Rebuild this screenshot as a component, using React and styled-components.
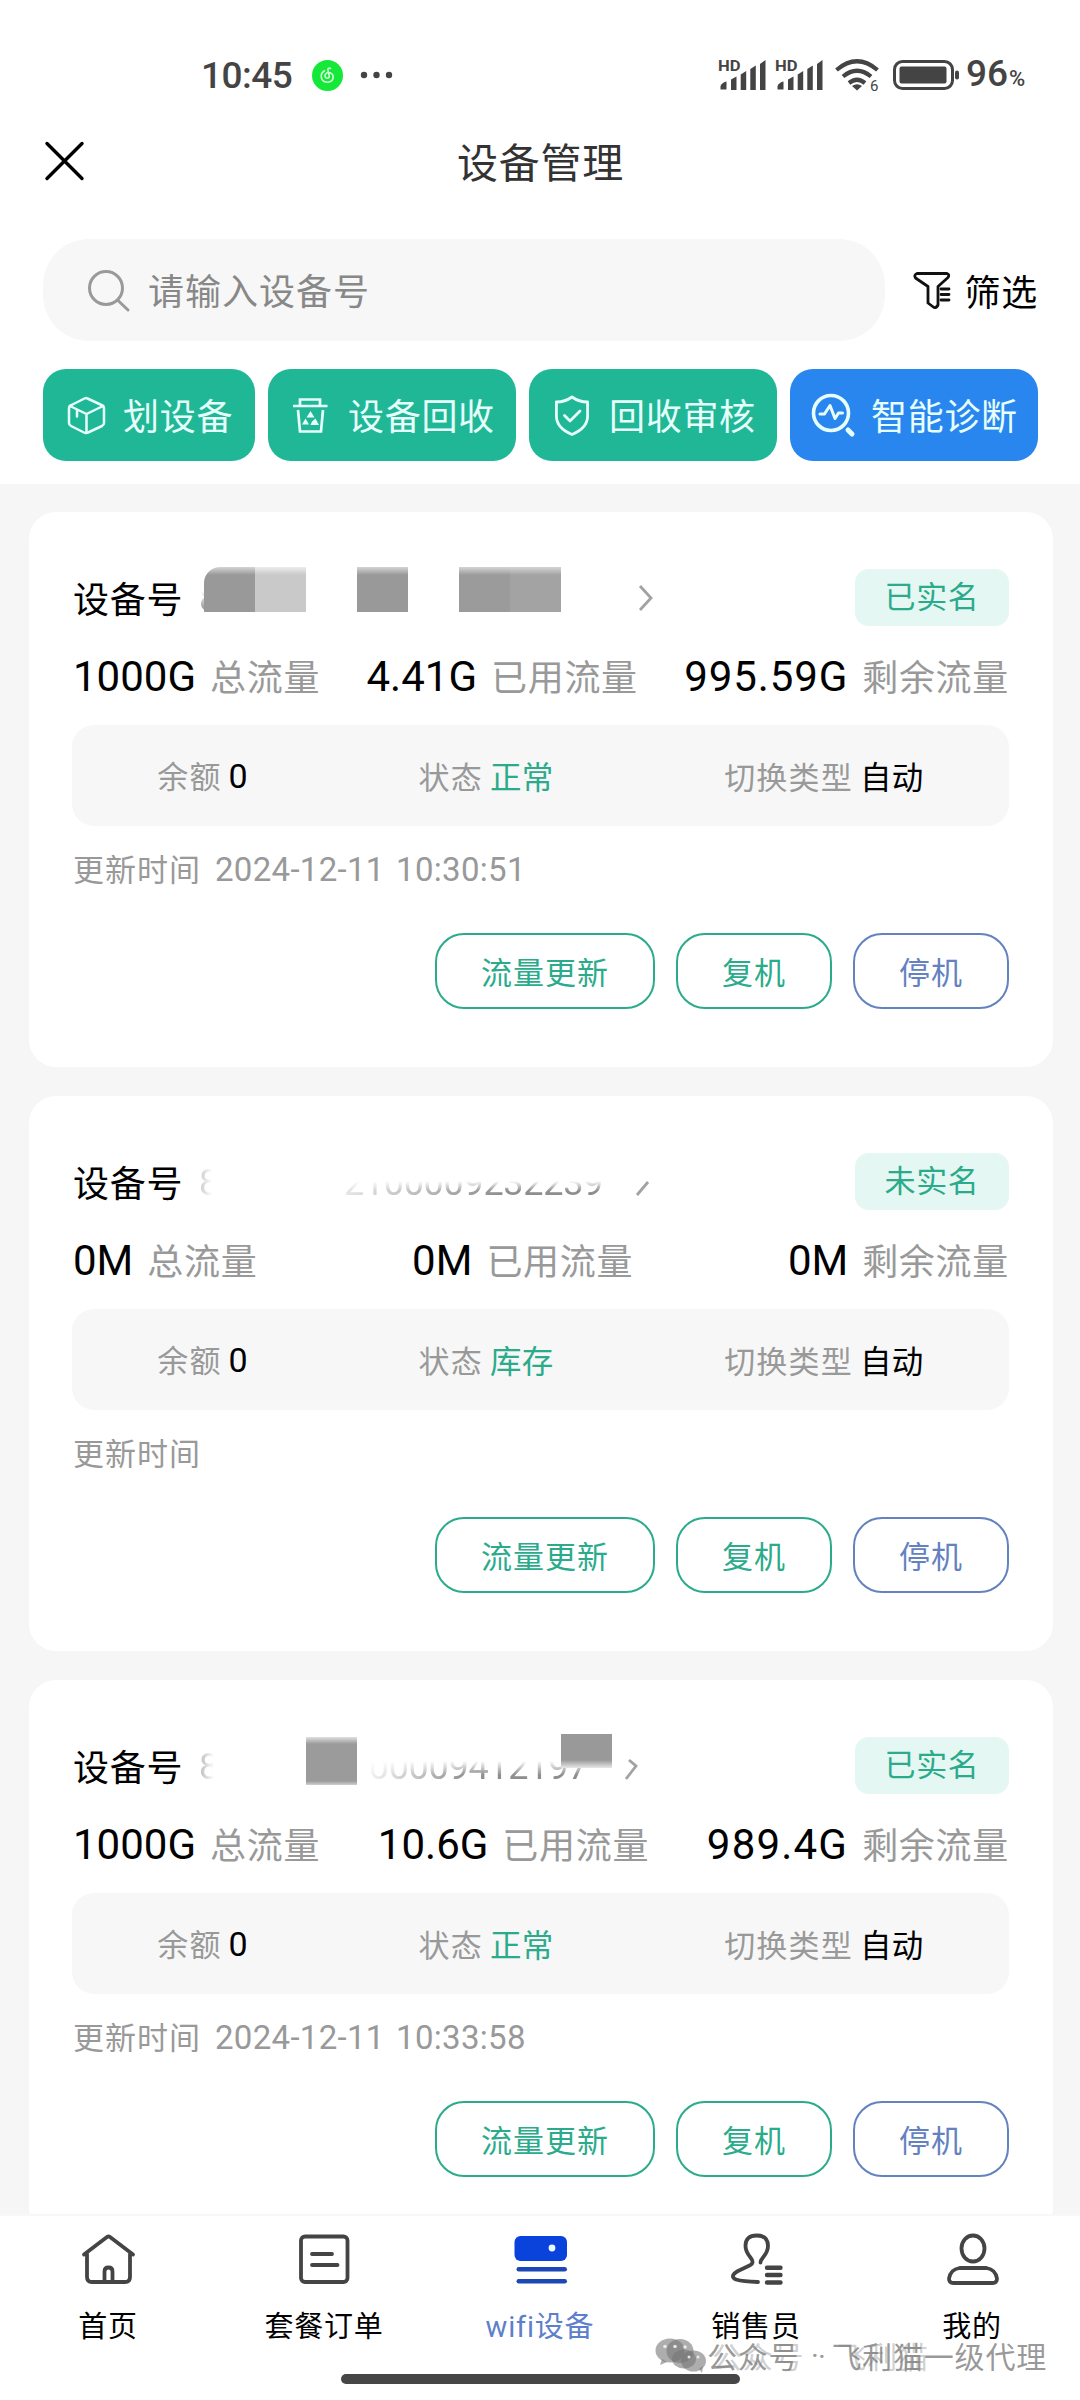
import React from 'react'
import styled, { createGlobalStyle } from 'styled-components'

const GlobalStyle = createGlobalStyle`
    * {
        box-sizing: border-box;
    }
    body {
        margin: 0;
        background: #fff;
    }
`

const Page = styled.div`
    position: relative;
    display: flex;
    flex-direction: column;
    width: 1080px;
    height: 2400px;
    overflow: hidden;
    background: #f6f6f6;
    font-family: Roboto, "Noto Sans CJK SC", sans-serif;
    color: #000;
    white-space: nowrap;
    svg {
        display: block;
        flex: none;
        overflow: visible;
    }
`

const Header = styled.header`
    height: 484px;
    padding: 56px 42px 0 43px;
    background: #fff;
`

const StatusBar = styled.div`
    display: flex;
    align-items: center;
    height: 38px;
    padding-left: 158px;
    color: #444;
`

const Clock = styled.span`
    width: 92px;
    margin-right: 19px;
    padding-top: 1px;
    font-size: 37px;
    font-weight: 500;
    line-height: 38px;
    letter-spacing: -0.5px;
`

const StatusIcons = styled.div`
    display: flex;
    align-items: center;
    margin-left: 325px;
`

const Percent = styled.span`
    margin-left: 6px;
    padding-top: 2px;
    font-size: 37px;
    font-weight: 500;
    line-height: 38px;
    small {
        margin-left: 1px;
        font-size: 22px;
    }
`

const TitleBar = styled.div`
    display: grid;
    grid-template-columns: 42px 1fr 42px;
    align-items: center;
    height: 136px;
`

const Title = styled.h1`
    margin: 0 0 5px;
    text-align: center;
    font-size: 41px;
    font-weight: 400;
    letter-spacing: 0.7px;
    color: #333;
`

const SearchRow = styled.div`
    display: flex;
    align-items: center;
    margin-top: 9px;
    height: 102px;
`

const SearchBox = styled.div`
    display: flex;
    align-items: center;
    width: 842px;
    height: 102px;
    padding-left: 43px;
    border-radius: 46px;
    background: #f7f7f7;
    color: #888;
    font-size: 36px;
    letter-spacing: 1px;
    span {
        margin: 0 0 2px 17px;
    }
`

const Filter = styled.div`
    display: flex;
    align-items: center;
    margin-left: 28px;
    font-size: 36px;
    letter-spacing: 0.7px;
    span {
        margin: 0 0 1px 14px;
    }
`

const Actions = styled.div`
    display: flex;
    gap: 13px;
    margin-top: 28px;
`

const Action = styled.div`
    display: flex;
    align-items: center;
    flex: none;
    width: ${(p) => p.$width}px;
    height: 92px;
    padding-left: 22px;
    border-radius: 23px;
    background: ${(p) => p.$bg};
    color: #e6fffb;
    font-size: 36px;
    letter-spacing: 0.7px;
    span {
        margin: 0 0 2px 15px;
    }
`

const List = styled.main`
    display: flex;
    flex: 1;
    flex-direction: column;
    gap: 29px;
    min-height: 0;
    padding: 28px 27px 0 29px;
    overflow: hidden;
`

const Card = styled.section`
    flex: none;
    height: 555px;
    padding: 57px 44px 0 43px;
    border-radius: 27px;
    background: #fff;
`

const CardHead = styled.div`
    display: flex;
    align-items: center;
    height: 57px;
`

const DeviceLabel = styled.span`
    width: 108px;
    font-size: 36px;
    letter-spacing: 0.7px;
    margin: 0 0 1px 1px;
`

// The serial is hidden by mosaic tiles laid over the faded digits
const Serial = styled.div`
    position: relative;
    width: ${(p) => p.$width}px;
    height: 57px;
    margin-left: 17px;
    color: #8e8e8e;
    font-size: 36px;
    line-height: 60px;
`

const Digits = styled.span`
    position: absolute;
    top: 0;
    left: ${(p) => p.$left}px;
    width: ${(p) => p.$width}px;
    height: 57px;
    text-align: right;
    letter-spacing: -0.3px;
    mask-image: ${(p) => p.$mask};
    mask-composite: intersect;
`

const Tile = styled.i`
    position: absolute;
    left: ${(p) => p.$left}px;
    top: ${(p) => p.$top}px;
    width: 51px;
    height: ${(p) => p.$height}px;
    background: ${(p) => p.$bg};
    border-top-left-radius: ${(p) => p.$round || 0}px;
`

const Badge = styled.span`
    margin-left: auto;
    width: 154px;
    height: 57px;
    border-radius: 14px;
    background: #e5f7f2;
    color: #2bab8b;
    text-align: center;
    font-size: 31px;
    line-height: 57px;
    letter-spacing: 0.7px;
`

const Traffic = styled.div`
    display: flex;
    justify-content: space-between;
    align-items: center;
    height: 60px;
    margin-top: 19px;
    padding-left: 1px;
`

const Amount = styled.div`
    display: flex;
    align-items: baseline;
    color: #999;
    font-size: 36px;
    letter-spacing: 0.7px;
    b {
        margin-right: 14px;
        color: #000;
        font-size: 42px;
        font-weight: 400;
        letter-spacing: ${(p) => p.$spacing || 0}px;
    }
`

const InfoBox = styled.div`
    display: flex;
    justify-content: space-around;
    align-items: center;
    height: 101px;
    margin-top: 20px;
    padding-bottom: 2px;
    border-radius: 22px;
    background: #f7f7f7;
`

const Info = styled.div`
    color: #999;
    font-size: 31px;
    letter-spacing: 1.2px;
    span {
        margin-left: 7px;
        color: ${(p) => p.$color || '#000'};
        font-size: 31.5px;
        letter-spacing: 0.4px;
    }
`

const Balance = styled(Info)`
    span {
        font-size: 34px;
    }
`

const Updated = styled.div`
    height: 48px;
    margin: 20px 0 0 1px;
    color: #999;
    font-size: 31px;
    line-height: 47px;
    letter-spacing: 1px;
    span {
        margin-left: 14px;
        font-size: 33px;
        letter-spacing: 0.3px;
        word-spacing: 3px;
    }
`

const Buttons = styled.div`
    display: flex;
    justify-content: flex-end;
    gap: 21px;
    margin-top: 39px;
`

const Button = styled.button`
    width: ${(p) => p.$width}px;
    height: 76px;
    padding: 0 0 2px;
    border: 2px solid ${(p) => p.$color};
    border-radius: 29px;
    background: none;
    color: ${(p) => p.$color};
    font-family: inherit;
    font-size: 31px;
    letter-spacing: 1px;
`

const Nav = styled.nav`
    display: flex;
    flex-direction: column;
    align-items: center;
    height: 186px;
    border-top: 2px solid #f8f8f8;
    background: #fff;
`

const Tabs = styled.div`
    display: grid;
    grid-template-columns: repeat(5, 216px);
    height: 158px;
    padding-top: 17px;
`

const Tab = styled.div`
    display: flex;
    flex-direction: column;
    align-items: center;
    color: ${(p) => (p.$active ? '#5e7fcb' : '#000')};
    font-size: 29px;
    letter-spacing: 0.8px;
    span {
        margin-top: 18px;
        line-height: 44px;
    }
`

const HomeBar = styled.div`
    width: 399px;
    height: 10px;
    border-radius: 5px;
    background: #464646;
`

const Watermark = styled.div`
    position: absolute;
    left: 655px;
    top: 2333px;
    display: flex;
    align-items: center;
    height: 44px;
    color: rgba(120, 120, 120, 0.75);
    font-size: 30px;
    letter-spacing: 0.8px;
    span {
        text-shadow: 5px 0 0 rgba(150, 150, 150, 0.45);
    }
    em {
        width: 32px;
        text-align: center;
        font-style: normal;
        text-shadow: 7px 1px 0 rgba(120, 120, 120, 0.75);
    }
`

const Signal = ({ gap = 0 }) => (
    <svg width="48" height="34" viewBox="0 0 48 34" style={{ marginRight: gap }}>
        <text x="0" y="13" fontSize="15" fontWeight="700" textLength="22.5" lengthAdjust="spacingAndGlyphs" fill="#444" fontFamily="Roboto, sans-serif">HD</text>
        <g fill="#444">
            <path d="M2.5 31.5v-3.5q2-4 6-4.500v8z" />
            <path d="M13 32V21.500l5.500-3v13.500z" />
            <path d="M22.700 32V16.500l5.500-3.500v19z" />
            <path d="M32.300 32V11l5.500-3.500v24.500z" />
            <path d="M42 32V6l5.500-4v30z" />
        </g>
    </svg>
)

const Wifi = () => (
    <svg width="46" height="36" viewBox="0 0 46 36" fill="none" stroke="#444" strokeWidth="4.200">
        <path d="M1.500 13q20.500-17.500 41 0" />
        <path d="M8 19.500q14-11.500 28 0" />
        <path d="M14 26q8-6.500 16 0" />
        <path d="M17 29l5 4.500 5-4.500q-5-3.500-10 0z" fill="#444" stroke="none" />
        <text x="35" y="34" fontSize="15" fill="#444" stroke="none" fontFamily="Roboto, sans-serif">6</text>
    </svg>
)

const Battery = () => (
    <svg width="67" height="32" viewBox="0 0 67 32">
        <rect x="1.500" y="2.500" width="58" height="27" rx="8" fill="none" stroke="#444" strokeWidth="3" />
        <rect x="6.500" y="7.500" width="47" height="17" rx="2" fill="#444" />
        <rect x="62" y="11.500" width="4" height="9" rx="2" fill="#444" />
    </svg>
)

const MusicBadge = () => (
    <svg width="31" height="31" viewBox="0 0 31 31">
        <circle cx="15.500" cy="15.500" r="15.500" fill="#16e83a" />
        <g fill="none" stroke="#d3ffd8" strokeWidth="1.600" strokeLinecap="round">
            <path d="M18.500 8.500c-2-1-3 .2-2.500 2l1.300 5.500c.4 3-4.300 3-4.300 0 0-2.500 2.500-4 5-3.200 4.500 1.500 4.500 9-2.200 9.500-7.500 0-8.500-8.500-3.300-11.500" />
        </g>
    </svg>
)

const MoreDots = () => (
    <svg width="33" height="8" viewBox="0 0 33 8" fill="#444" style={{ marginLeft: 17 }}>
        <circle cx="4" cy="4" r="3.200" />
        <circle cx="16.500" cy="4" r="3.200" />
        <circle cx="29" cy="4" r="3.200" />
    </svg>
)

const CloseIcon = () => (
    <svg width="42" height="42" viewBox="0 0 42 42" stroke="#000" strokeWidth="3.400" strokeLinecap="round">
        <path d="M4 2.500l35 35M39 2.500L4 37.500" />
    </svg>
)

const SearchIcon = () => (
    <svg width="45" height="44" viewBox="0 0 45 44" fill="none" stroke="#999" strokeWidth="3" strokeLinecap="round">
        <circle cx="20" cy="20" r="16.500" />
        <path d="M32 32.500l10 9.500" />
    </svg>
)

const FilterIcon = () => (
    <svg width="38" height="38" viewBox="0 0 38 38" fill="none" stroke="#111" strokeWidth="2.800" strokeLinejoin="round" strokeLinecap="round">
        <path d="M4 2.500h30q3 1 1 4L25 15.500v18.500q-1.500 3-4 2.500L15 32V15.500L2.500 7Q.5 4 4 2.500z" />
        <path d="M28 18h8M28 23.500h8M28 29h8" />
    </svg>
)

const white = { fill: 'none', stroke: '#e6fffb', strokeLinecap: 'round', strokeLinejoin: 'round' }

const BoxIcon = () => (
    <svg width="43" height="43" viewBox="0 0 43 43" {...white} strokeWidth="2.500">
        <path d="M19.500 4.500q1.500-1 3 0l14 6.500q2.500 1 2.500 3.500V29q0 2-2 3l-14 6.500q-2 1-4 0L6 32q-2-1-2-3V14.500Q4 12 6.500 11z" />
        <path d="M5 12L21.500 20 38 12M21.500 20V39M12 16v6.500" />
    </svg>
)

const RecycleIcon = () => (
    <svg width="43" height="43" viewBox="0 0 43 43" {...white} strokeWidth="2.700" strokeLinecap="butt" strokeLinejoin="miter">
        <path d="M3 12h34.500M10 12V5.500h20V12M8 16l2 21.500h21L33 16" />
        <path d="M20.500 17l4 6.500h-8zM15.500 24.500l3.500 6h-7zM20.500 31h8.500l-3.500-6.500-3.500 3z" fill="#e6fffb" stroke="none" />
    </svg>
)

const ShieldIcon = () => (
    <svg width="43" height="43" viewBox="0 0 43 43" {...white} strokeWidth="2.800">
        <path d="M21 3q7 5 15.600 5v14q0 12-15.600 18.500Q5.400 34 5.400 22V8Q14 8 21 3z" />
        <path d="M13.500 21.500l5.500 5.500 10-10" />
    </svg>
)

const DiagnoseIcon = () => (
    <svg width="44" height="44" viewBox="0 0 44 44" {...white}>
        <circle cx="19" cy="20" r="17.500" strokeWidth="3.600" />
        <path d="M8 21h4.500L18 12.500l5 13 3.500-5.500h4" strokeWidth="3" />
        <path d="M36 37l4 4" strokeWidth="5" />
    </svg>
)

const chevrons = {
    full: 'M3 2l11 12L3 26',
    tail: 'M14 14L3 27',
    cut: 'M7 8l7 6L4 27',
}

const Chevron = ({ kind = 'full' }) => (
    <svg width="18" height="28" viewBox="0 0 18 28" fill="none" stroke="#a2a2a2" strokeWidth="2.800">
        <path d={chevrons[kind]} />
    </svg>
)

const dark = { fill: 'none', stroke: '#444', strokeWidth: 3.800, strokeLinecap: 'round', strokeLinejoin: 'round' }

const HomeIcon = () => (
    <svg width="56" height="54" viewBox="0 0 56 54" {...dark}>
        <path d="M4 21.500L27 4q1.500-1 3 0L53 21.500M7 21v23q0 5 5 5h33q5 0 5-5V21M24.500 48V38.500q0-4 4-4t4 4V48" />
    </svg>
)

const OrderIcon = () => (
    <svg width="56" height="54" viewBox="0 0 56 54" {...dark}>
        <rect x="5" y="3.500" width="46.500" height="45.500" rx="4" />
        <path d="M16 21h20M16 32h25.500" />
    </svg>
)

const DeviceIcon = () => (
    <svg width="56" height="54" viewBox="0 0 56 54">
        <rect x="2.500" y="3" width="52.500" height="25" rx="6" fill="#0a43dc" />
        <circle cx="40" cy="15" r="3.400" fill="#e8fbff" />
        <rect x="4.500" y="34" width="50.500" height="4.600" rx="2.300" fill="#1b48b5" />
        <rect x="4.500" y="46" width="50.500" height="4.600" rx="2.300" fill="#1b48b5" />
    </svg>
)

const SalesIcon = () => (
    <svg width="56" height="54" viewBox="0 0 56 54" {...dark}>
        <path d="M32.500 29.500q0-2 2.500-5 5-6 5-11.500Q40 2.500 28.700 2.500T17.500 13q0 5.500 5 11.500 4.500 5.500-1 8L10 38q-9 5-2 8.500 7 2 22 2.500" />
        <path d="M39 34.700h13.500M39 42h13.500M39 49.500h13.500" strokeWidth="4.400" />
    </svg>
)

const MineIcon = () => (
    <svg width="56" height="54" viewBox="0 0 56 54" {...dark}>
        <ellipse cx="29" cy="15.500" rx="11.500" ry="13" />
        <path d="M15.500 35h27q9 1.500 10.500 10.500 0 4.500-4.500 4.500h-39Q5 50 5 45.500 6.500 36.500 15.500 35z" />
    </svg>
)

const WechatMark = () => (
    <svg width="52" height="36" viewBox="0 0 52 36" fill="#777" fillOpacity="0.6">
        <ellipse cx="15" cy="13.500" rx="14.500" ry="12" />
        <ellipse cx="25" cy="14" rx="13.500" ry="12" />
        <ellipse cx="29" cy="22" rx="12" ry="9.500" />
        <ellipse cx="38.500" cy="24" rx="12.500" ry="10.500" />
        <path d="M7 22l-2 6 7-3zM44 32l3 4 1-7z" />
        <g fill="#eee" fillOpacity="0.9">
            <circle cx="10" cy="9.500" r="1.800" />
            <circle cx="20" cy="9.500" r="1.800" />
            <circle cx="30" cy="10" r="1.800" />
            <circle cx="34" cy="20" r="1.500" />
            <circle cx="43" cy="20" r="1.500" />
        </g>
    </svg>
)

const GREEN = '#2bab8b'
const BLUE = '#6482bf'

const actions = [
    { name: '划设备', icon: BoxIcon, width: 212, bg: '#20b797' },
    { name: '设备回收', icon: RecycleIcon, width: 248, bg: '#20b797' },
    { name: '回收审核', icon: ShieldIcon, width: 248, bg: '#20b797' },
    { name: '智能诊断', icon: DiagnoseIcon, width: 248, bg: '#2a86ef' },
]

const devices = [
    {
        id: 1,
        real: '已实名',
        total: '1000G',
        used: '4.41G',
        left: '995.59G',
        spacing: 0.9,
        state: '正常',
        time: '2024-12-11 10:30:51',
        serialWidth: 439,
        digits: [{ text: '8', left: 0, width: 21, mask: 'linear-gradient(transparent 22px, #000 42px)' }],
        tiles: [
            { left: 6, top: -2, height: 45, bg: 'linear-gradient(#d5d5d5, #999 8px)', round: 16 },
            { left: 57, top: -2, height: 45, bg: 'linear-gradient(#ececec, #c9c9c9 8px)' },
            { left: 159, top: -2, height: 45, bg: 'linear-gradient(#d5d5d5, #999 8px)' },
            { left: 261, top: -2, height: 45, bg: 'linear-gradient(#d5d5d5, #9b9b9b 8px)' },
            { left: 312, top: -2, height: 45, bg: 'linear-gradient(#d5d5d5, #a3a3a3 8px)' },
        ],
    },
    {
        id: 2,
        real: '未实名',
        total: '0M',
        used: '0M',
        left: '0M',
        state: '库存',
        time: '',
        serialWidth: 436,
        chevron: 'tail',
        digits: [
            { text: '8', left: 0, width: 21, mask: 'linear-gradient(90deg, #0008, transparent 14px)' },
            { text: '2100009232239', left: 103, width: 302, mask: 'linear-gradient(transparent 28px, #000 38px), linear-gradient(90deg, transparent, #000 200px)' },
        ],
        tiles: [],
    },
    {
        id: 3,
        real: '已实名',
        total: '1000G',
        used: '10.6G',
        left: '989.4G',
        spacing: 1.2,
        state: '正常',
        time: '2024-12-11 10:33:58',
        serialWidth: 424,
        chevron: 'cut',
        digits: [
            { text: '8', left: 0, width: 21, mask: 'linear-gradient(90deg, #000a, transparent 16px)' },
            { text: '00009412197', left: 160, width: 230, mask: 'linear-gradient(transparent 24px, #000 38px), linear-gradient(90deg, transparent, #000 110px)' },
        ],
        tiles: [
            { left: 108, top: 0, height: 48, bg: 'linear-gradient(#e0e0e0, #9b9b9b 7px, #9b9b9b 44px, #d0d0d0)' },
            { left: 363, top: -3, height: 34, bg: 'linear-gradient(#999 26px, #e8e8e8)' },
        ],
    },
]

const tabs = [
    { name: '首页', icon: HomeIcon },
    { name: '套餐订单', icon: OrderIcon },
    { name: 'wifi设备', icon: DeviceIcon, active: true },
    { name: '销售员', icon: SalesIcon },
    { name: '我的', icon: MineIcon },
]

const DeviceCard = ({ device }) => (
    <Card>
        <CardHead>
            <DeviceLabel>设备号</DeviceLabel>
            <Serial $width={device.serialWidth}>
                {device.digits.map((d) => (
                    <Digits key={d.text} $left={d.left} $width={d.width} $mask={d.mask}>{d.text}</Digits>
                ))}
                {device.tiles.map((t) => (
                    <Tile key={t.left} $left={t.left} $top={t.top} $height={t.height} $bg={t.bg} $round={t.round} />
                ))}
            </Serial>
            <Chevron kind={device.chevron} />
            <Badge>{device.real}</Badge>
        </CardHead>
        <Traffic>
            <Amount><b>{device.total}</b>总流量</Amount>
            <Amount><b>{device.used}</b>已用流量</Amount>
            <Amount $spacing={device.spacing}><b>{device.left}</b>剩余流量</Amount>
        </Traffic>
        <InfoBox>
            <Balance>余额<span>0</span></Balance>
            <Info $color={GREEN}>状态<span>{device.state}</span></Info>
            <Info>切换类型<span>自动</span></Info>
        </InfoBox>
        <Updated>更新时间<span>{device.time}</span></Updated>
        <Buttons>
            <Button $width={220} $color={GREEN}>流量更新</Button>
            <Button $width={156} $color={GREEN}>复机</Button>
            <Button $width={156} $color={BLUE}>停机</Button>
        </Buttons>
    </Card>
)

const App = () => {
    return (
        <Page>
            <GlobalStyle />
            <Header>
                <StatusBar>
                    <Clock>10:45</Clock>
                    <MusicBadge />
                    <MoreDots />
                    <StatusIcons>
                        <Signal gap={9} />
                        <Signal gap={12} />
                        <Wifi />
                        <span style={{ width: 12 }} />
                        <Battery />
                        <Percent>96<small>%</small></Percent>
                    </StatusIcons>
                </StatusBar>
                <TitleBar>
                    <CloseIcon />
                    <Title>设备管理</Title>
                </TitleBar>
                <SearchRow>
                    <SearchBox>
                        <SearchIcon />
                        <span>请输入设备号</span>
                    </SearchBox>
                    <Filter>
                        <FilterIcon />
                        <span>筛选</span>
                    </Filter>
                </SearchRow>
                <Actions>
                    {actions.map(({ name, icon: Icon, width, bg }) => (
                        <Action key={name} $width={width} $bg={bg}>
                            <Icon />
                            <span>{name}</span>
                        </Action>
                    ))}
                </Actions>
            </Header>
            <List>
                {devices.map((device) => (
                    <DeviceCard key={device.id} device={device} />
                ))}
            </List>
            <Nav>
                <Tabs>
                    {tabs.map(({ name, icon: Icon, active }) => (
                        <Tab key={name} $active={active}>
                            <Icon />
                            <span>{name}</span>
                        </Tab>
                    ))}
                </Tabs>
                <HomeBar />
            </Nav>
            <Watermark>
                <WechatMark />
                <span>公众号</span>
                <em>·</em>
                <span>飞利猫</span>一级代理
            </Watermark>
        </Page>
    )
}

export default App
